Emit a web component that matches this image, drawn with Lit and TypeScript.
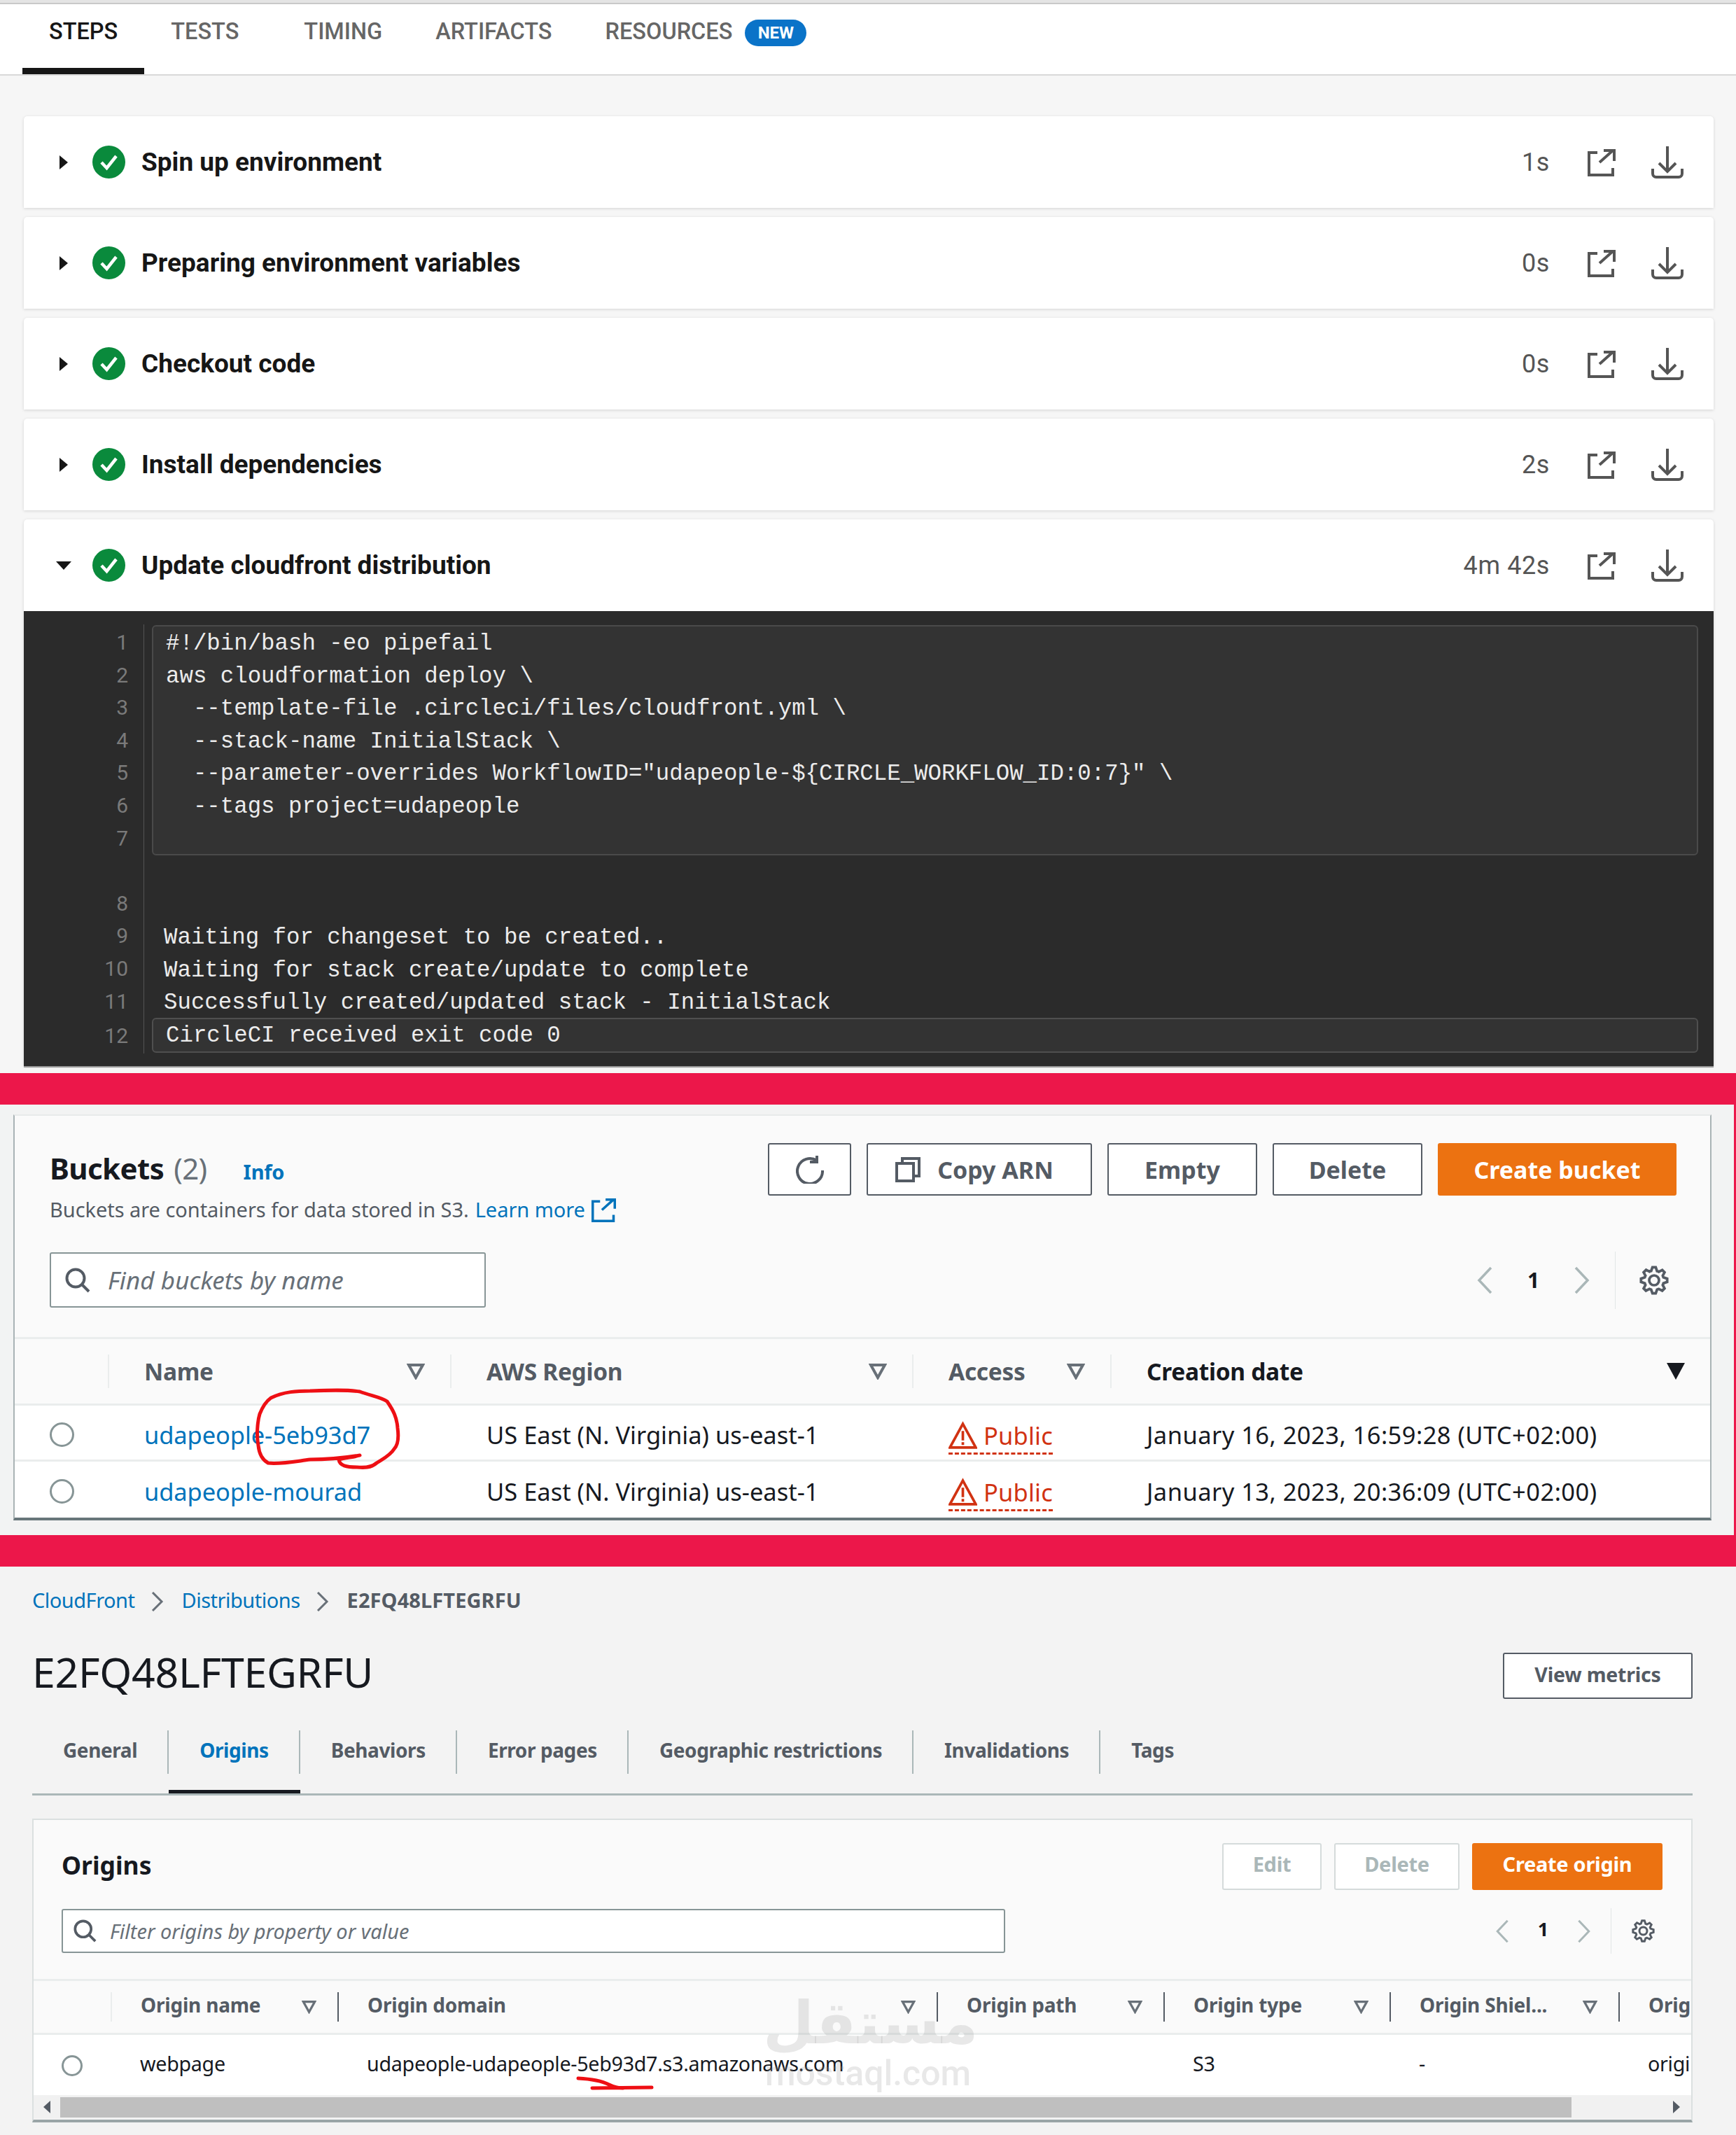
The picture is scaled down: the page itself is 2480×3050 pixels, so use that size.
import { LitElement, html, css, svg } from "lit";
import { customElement } from "lit/decorators.js";

const check = html`<svg class="check" viewBox="0 0 47 47"><circle cx="23.5" cy="23.5" r="23.5" fill="#0a8a3c"/><path d="M13 24l7.5 8L34 15" fill="none" stroke="#fff" stroke-width="4.5"/></svg>`;
const ext = html`<svg class="ext" viewBox="0 0 40 40" fill="none" stroke="currentColor" stroke-width="4"><path d="M14 6H2v32h34V28"/><path d="M17 20L36 3M23 3h15v15"/></svg>`;
const dl = html`<svg class="dl" viewBox="0 0 46 46" fill="none" stroke="#555" stroke-width="4"><path d="M23 0v36M11 24l12 12 12-12"/><path d="M2 32v7a5 5 0 0 0 5 5h32a5 5 0 0 0 5-5v-7"/></svg>`;
const tri = html`<svg class="tri" viewBox="0 0 26 24"><path d="M3 3h20L13 21z" fill="none" stroke="#687078" stroke-width="4"/></svg>`;
const triBlack = html`<svg class="tri black" viewBox="0 0 26 24"><path d="M0 0h26L13 24z" fill="#16191f"/></svg>`;
const search = html`<svg class="search" viewBox="0 0 36 36" fill="none" stroke="#545b64" stroke-width="4"><circle cx="15" cy="15" r="12.5"/><path d="M24 24l10 10"/></svg>`;
const gear = html`<svg class="gear" viewBox="-1 -1 18 18" fill="none" stroke="#545b64" stroke-width="1.6"><path d="M13.3 5.2l1.1-2.1L13 1.7l-2.1 1.1c-.3-.2-.7-.3-1.1-.4L9 0H7l-.8 2.3c-.3.1-.7.2-1 .4L3.1 1.6 1.6 3.1l1.1 2.1c-.2.3-.3.7-.4 1L0 7v2l2.3.8c.1.4.3.7.4 1.1l-1.1 2.1 1.4 1.4 2.1-1.1c.3.2.7.3 1.1.4L7 16h2l.8-2.3c.4-.1.7-.3 1.1-.4l2.1 1.1 1.4-1.4-1.1-2.1c.2-.3.3-.7.4-1.1L16 9V7l-2.3-.8c-.1-.3-.3-.7-.4-1z"/><circle cx="8" cy="8" r="3"/></svg>`;
const chevL = html`<svg class="chev" viewBox="0 0 22 40" fill="none" stroke="#aab7b8" stroke-width="3.5"><path d="M20 2L3 20l17 18"/></svg>`;
const chevR = html`<svg class="chev" viewBox="0 0 22 40" fill="none" stroke="#aab7b8" stroke-width="3.5"><path d="M2 2l17 18L2 38"/></svg>`;
const crumbChev = html`<svg class="cchev" viewBox="0 0 18 28" fill="none" stroke="#687078" stroke-width="3"><path d="M2 1l13 13L2 27"/></svg>`;
const warn = html`<svg class="warn" viewBox="0 0 40 40" fill="none" stroke="#d13212" stroke-width="3.6"><path d="M20 4L38 37H2z"/><path d="M20 14v13M20 29.500v4"/></svg>`;

const steps = [
  ["Spin up environment", "1s"],
  ["Preparing environment variables", "0s"],
  ["Checkout code", "0s"],
  ["Install dependencies", "2s"],
];
const code1 = [
  "#!/bin/bash -eo pipefail",
  "aws cloudformation deploy \\",
  "  --template-file .circleci/files/cloudfront.yml \\",
  "  --stack-name InitialStack \\",
  '  --parameter-overrides WorkflowID="udapeople-${CIRCLE_WORKFLOW_ID:0:7}" \\',
  "  --tags project=udapeople",
  " ",
];
const code2 = [
  "Waiting for changeset to be created..",
  "Waiting for stack create/update to complete",
  "Successfully created/updated stack - InitialStack",
];

@customElement("app-root")
export class AppRoot extends LitElement {
  static styles = css`
    :host { display: block; position: relative; width: 2480px; height: 3050px; overflow: hidden; font-family: "Noto Sans", sans-serif; color: #16191f; background: #f3f3f3; }
    svg { display: block; flex: none; }
    .redbar { height: 45px; background: #ec174a; }
    .link { color: #0073bb; }

    /* build section */
    .build { height: 1533px; background: #f6f6f6; font-family: Roboto, sans-serif; }
    .topbar { height: 6px; background: #e4e4e4; border-bottom: 2px solid #c9c9c9; box-sizing: border-box; }
    .btabs { display: flex; height: 102px; box-sizing: border-box; background: #fff; border-bottom: 2px solid #d9d9d9; padding-left: 32px; }
    .btab { height: 100px; box-sizing: border-box; padding: 21px 38px 0; font-size: 32.500px; line-height: 36px; font-weight: 500; color: #666; display: flex; gap: 18px; }
    .btab.on { color: #161616; border-bottom: 9px solid #161616; }
    .btab.wide { margin-right: 17px; }
    .badge { height: 38px; width: 88px; margin-top: 1px; border-radius: 19px; background: #0a73c8; color: #fff; font-size: 24px; font-weight: 700; line-height: 38px; text-align: center; }
    .steps { display: flex; flex-direction: column; gap: 13px; margin: 58px 32px 0 34px; }
    .step { background: #fff; border-radius: 5px 5px 0 0; box-shadow: 0 1px 4px rgba(0,0,0,.14); }
    .srow { height: 131px; display: flex; align-items: center; padding: 0 43px 0 45px; }
    .arrow { width: 24px; height: 24px; margin-right: 29px; }
    .check { width: 47px; height: 47px; margin-right: 23px; }
    .sname { flex: 1; font-size: 37px; font-weight: 700; color: #161616; }
    .stime { font-size: 36px; color: #555; letter-spacing: .6px; }
    .ext { width: 40px; height: 40px; margin-left: 54px; color: #555; }
    .dl { width: 46px; height: 46px; margin-left: 51px; }
    .code { height: 650px; background: #2b2b2b; display: flex; box-shadow: 0 2px 0 #999; font-family: "Liberation Mono", monospace; font-size: 32.4px; line-height: 46.6px; color: #ececec; }
    .gutter { width: 172px; height: 613px; box-sizing: border-box; margin-top: 19px; padding: 3px 22px 0 0; border-right: 1px solid #555; text-align: right; color: #7a7a7a; font-family: Roboto, sans-serif; font-size: 30px; }
    .gap { height: 46.6px; }
    .num12 { margin-top: 3px; }
    .cbody { flex: 1; padding: 20px 22px 0 11px; }
    .cbox { height: 329px; box-sizing: border-box; border: 2px solid #4a4a4a; border-radius: 6px; background: #333; padding: 2px 0 0 18px; }
    .cplain { margin-top: 95px; height: 137px; padding-left: 17px; }
    .cbox div, .cplain div, .cbox2 { white-space: pre; }
    .cbox2 { height: 50px; box-sizing: border-box; border: 2px solid #4f4f4f; border-radius: 6px; background: #333; padding-left: 18px; line-height: 48px; }

    /* s3 */
    .s3 { height: 615px; box-sizing: border-box; padding: 14px 0 0 19px; border-right: 3px solid #ec174a; background: #f2f3f3; }
    .card { background: #fafafa; box-sizing: border-box; width: 2426px; height: 580px; border: 2px solid #a9b3b5; border-top-color: #e8eaea; border-bottom: 4px solid #68767a; overflow: hidden; }
    .chead { display: flex; justify-content: space-between; padding: 39px 48px 0 50px; }
    .title { font-size: 42px; font-weight: 700; line-height: 75px; height: 77px; margin-top: -2px; letter-spacing: -.6px; display: flex; align-items: baseline; }
    .count { font-weight: 400; color: #687078; margin-left: 14px; }
    .info { font-size: 29px; font-weight: 700; color: #0073bb; margin-left: 52px; letter-spacing: -.2px; }
    .desc { font-size: 29px; line-height: 40px; color: #545b64; display: flex; align-items: center; letter-spacing: -.05px; }
    .desc .link { margin-left: 9px; }
    .desc .ext { width: 35px; height: 35px; margin-left: 9px; color: #0073bb; }
    .btns { display: flex; gap: 22px; }
    .btn { height: 75px; box-sizing: border-box; border: 2px solid #545b64; border-radius: 3px; background: #fff; color: #545b64; font-weight: 700; font-size: 34px; display: flex; align-items: center; justify-content: center; }
    .btn svg { margin-right: 24px; }
    .b-refresh { width: 119px; }
    .b-refresh svg { margin: 0; }
    .b-copy { width: 322px; padding-right: 14px; }
    .b-empty, .b-del { width: 214px; }
    .b-create { width: 341px; background: #ec7211; border-color: #ec7211; color: #fff; }
    .srow2 { display: flex; justify-content: space-between; align-items: center; margin: 41px 59px 0 50px; height: 79px; }
    .input { width: 623px; height: 79px; box-sizing: border-box; border: 2px solid #879596; border-radius: 3px; background: #fff; display: flex; align-items: center; padding-left: 20px; font-size: 35px; font-style: italic; color: #687078; letter-spacing: .1px; }
    .search { width: 36px; height: 36px; margin-right: 25px; }
    .pager { display: flex; align-items: center; height: 82px; }
    .chev { width: 22px; height: 40px; }
    .pnum { width: 117px; text-align: center; font-size: 30px; font-weight: 700; }
    .pager .pdiv { width: 1px; height: 82px; background: #e2e6e6; margin: 0 34px 0 36px; }
    .gear { width: 42px; height: 42px; }
    .spacer { height: 42px; }
    .thead, .trow { display: grid; grid-template-columns: 133px 489px 660px 283px 1fr; }
    .thead { height: 98px; box-sizing: border-box; border-top: 3px solid #eaeded; border-bottom: 3px solid #eaeded; align-items: center; }
    .th { height: 48px; border-left: 2px solid #eaeded; display: flex; align-items: center; justify-content: space-between; padding: 0 36px 0 50px; font-size: 33.500px; font-weight: 700; color: #545b64; letter-spacing: -.3px; }
    .th.none { border: 0; }
    .th.dark { color: #16191f; }
    .tri { width: 26px; height: 24px; }
    .trow { background: #fff; align-items: center; font-size: 34.500px; height: 80px; box-sizing: border-box; padding-top: 5px; border-bottom: 3px solid #eaeded; }
    .trow.last { height: 81px; border: 0; padding-top: 3px; }
    .radio { width: 35px; height: 35px; box-sizing: border-box; border: 3px solid #879596; border-radius: 50%; background: #fff; margin-left: 50px; }
    .td { padding-left: 52px; white-space: nowrap; overflow: hidden; }
    .td.name { letter-spacing: -.1px; }
    .td.date { letter-spacing: .45px; }
    .td.pc { display: flex; padding-top: 6px; }
    .pub { display: flex; align-items: center; gap: 9px; color: #d13212; border-bottom: 3px dashed #d13212; box-sizing: border-box; height: 52px; letter-spacing: .2px; }
    .warn { width: 41px; height: 41px; }

    /* cloudfront */
    .cf { height: 812px; padding: 29px 62px 0 46px; }
    .crumbs { display: flex; align-items: center; height: 36px; font-size: 29px; letter-spacing: -.5px; }
    .cchev { width: 18px; height: 28px; margin: 6px 26px 0 23px; }
    .cur { color: #545b64; font-weight: 700; letter-spacing: .1px; }
    .hrow { display: flex; justify-content: space-between; margin-top: 58px; height: 66px; }
    .h1 { font-size: 59px; line-height: 54px; letter-spacing: -.3px; }
    .vm { width: 271px; height: 66px; font-size: 28.500px; padding-bottom: 4px; letter-spacing: -.2px; }
    .ctabs { display: flex; margin-top: 45px; height: 93px; box-sizing: border-box; border-bottom: 3px solid #aab7b8; }
    .ctab { height: 90px; box-sizing: border-box; }
    .ctab.on { border-bottom: 5px solid #16191f; }
    .ctab span { display: block; height: 62px; line-height: 56px; box-sizing: border-box; padding: 0 43px 0 44px; border-right: 2px solid #aab7b8; font-size: 28px; font-weight: 700; color: #545b64; letter-spacing: -.4px; }
    .ctab.on span { color: #0073bb; }
    .ctab.end span { border: 0; }
    .ocard { margin-top: 33px; width: 2372px; height: 434px; box-sizing: border-box; background: #fafafa; border: 2px solid #dbe0e0; border-bottom: 4px solid #9aa5a7; }
    .ohead { display: flex; justify-content: space-between; align-items: center; padding: 33px 41px 0 40px; }
    .ot { font-size: 35.500px; font-weight: 700; padding-bottom: 5px; }
    .obtns { display: flex; gap: 18px; }
    .obtn { height: 67px; box-sizing: border-box; border: 2px solid #d5dbdb; border-radius: 3px; background: #fff; color: #aab7b8; font-size: 29px; font-weight: 700; display: flex; align-items: center; justify-content: center; letter-spacing: -.3px; padding-bottom: 8px; }
    .o-edit { width: 142px; }
    .o-del { width: 179px; }
    .o-new { width: 272px; background: #ec7211; border-color: #ec7211; color: #fff; }
    .osearch { display: flex; justify-content: space-between; align-items: center; margin: 27px 52px 0 40px; height: 63px; }
    .oinput { width: 1348px; height: 63px; padding-left: 15px; font-size: 29px; letter-spacing: 0; }
    .oinput .search { width: 33px; height: 33px; margin-right: 19px; }
    .opager { height: 65px; }
    .opager .chev { width: 20px; height: 34px; }
    .opager .pnum { width: 97px; font-size: 27px; margin-top: -6px; }
    .opager .pdiv { height: 65px; margin: 0 29px 0 28px; }
    .opager .gear { width: 33px; height: 33px; }
    .othead, .otrow { display: grid; grid-template-columns: 110px 324px 856px 324px 323px 327px 104px; overflow: hidden; }
    .othead { margin-top: 37px; height: 80px; box-sizing: border-box; border-top: 3px solid #eaeded; border-bottom: 3px solid #eaeded; align-items: center; }
    .oth { height: 42px; border-left: 2px solid #545b64; display: flex; align-items: center; justify-content: space-between; padding: 0 30px 6px 41px; box-sizing: border-box; font-size: 28px; font-weight: 700; color: #545b64; letter-spacing: -.2px; white-space: nowrap; overflow: hidden; }
    .oth.none { border: 0; }
    .oth.soft { border-left-color: #eaeded; }
    .oth .tri { width: 21px; height: 20px; margin-top: 6px; }
    .otrow { height: 86px; background: #fff; align-items: center; font-size: 28.700px; letter-spacing: -.3px; padding-bottom: 6px; box-sizing: border-box; }
    .otd { padding-left: 42px; white-space: nowrap; overflow: hidden; }
    .oradio { width: 30px; height: 30px; box-sizing: border-box; border: 3px solid #879596; border-radius: 50%; margin: 8px 0 0 40px; }
    .sbar { height: 34px; background: #f1f1f1; display: flex; align-items: center; }
    .sleft { width: 38px; display: flex; justify-content: center; }
    .thumb { width: 2159px; height: 29px; background: #bfbfbf; }
    .sright { margin-left: 145px; }
    .sarrow { width: 10px; height: 18px; }

    /* overlay */
    .ink { position: absolute; left: 0; top: 0; width: 2480px; height: 3050px; pointer-events: none; }
    .wm { position: absolute; left: 1090px; width: 300px; text-align: center; color: rgba(150,150,150,.22); pointer-events: none; white-space: nowrap; }
    .wm1 { top: 2830px; font: 700 84px/120px "DejaVu Sans", sans-serif; }
    .wm2 { top: 2932px; font: 500 50px/60px Roboto, sans-serif; }
  `;

  renderStep(name: string, time: string, open = false) {
    return html`<div class="srow">
      <svg class="arrow" viewBox="0 0 24 24">${open ? svg`<path d="M1 6h22L12 18z" fill="#161616"/>` : svg`<path d="M6 2l12 10L6 22z" fill="#161616"/>`}</svg>
      ${check}<div class="sname">${name}</div><div class="stime">${time}</div>${ext}${dl}
    </div>`;
  }

  build() {
    return html`<section class="build">
      <div class="topbar"></div>
      <div class="btabs">
        <div class="btab on">STEPS</div>
        <div class="btab wide">TESTS</div>
        <div class="btab">TIMING</div>
        <div class="btab">ARTIFACTS</div>
        <div class="btab">RESOURCES<span class="badge">NEW</span></div>
      </div>
      <div class="steps">
        ${steps.map(([n, t]) => html`<div class="step">${this.renderStep(n, t)}</div>`)}
        <div class="step">
          ${this.renderStep("Update cloudfront distribution", "4m 42s", true)}
          <div class="code">
            <div class="gutter">${[1, 2, 3, 4, 5, 6, 7].map((n) => html`<div>${n}</div>`)}<div class="gap"></div>${[8, 9, 10, 11].map((n) => html`<div>${n}</div>`)}<div class="num12">12</div></div>
            <div class="cbody">
              <div class="cbox">${code1.map((l) => html`<div>${l}</div>`)}</div>
              <div class="cplain">${code2.map((l) => html`<div>${l}</div>`)}</div>
              <div class="cbox2">CircleCI received exit code 0</div>
            </div>
          </div>
        </div>
      </div>
    </section>`;
  }

  s3() {
    const row = (name: string, date: string, last = false) => html`<div class="trow ${last ? "last" : ""}">
      <div class="radio"></div><div class="td link name">${name}</div><div class="td">US East (N. Virginia) us-east-1</div>
      <div class="td pc"><div class="pub">${warn}Public</div></div><div class="td date">${date}</div>
    </div>`;
    return html`<section class="s3"><div class="card">
      <div class="chead">
        <div>
          <div class="title">Buckets<span class="count">(2)</span><span class="info">Info</span></div>
          <div class="desc">Buckets are containers for data stored in S3.<span class="link">Learn more</span>${ext}</div>
        </div>
        <div class="btns">
          <div class="btn b-refresh"><svg width="40" height="40" viewBox="0 0 40 40" fill="none" stroke="#545b64" stroke-width="4"><path d="M30 7A18 18 0 1 0 38 21"/><path d="M30 0v9H20"/></svg></div>
          <div class="btn b-copy"><svg width="36" height="36" viewBox="0 0 36 36" fill="none" stroke="#545b64" stroke-width="4"><path d="M10 8V2h24v25h-8"/><rect x="2" y="9" width="24" height="25"/></svg>Copy ARN</div>
          <div class="btn b-empty">Empty</div>
          <div class="btn b-del">Delete</div>
          <div class="btn b-create">Create bucket</div>
        </div>
      </div>
      <div class="srow2">
        <div class="input">${search}Find buckets by name</div>
        <div class="pager">${chevL}<div class="pnum">1</div>${chevR}<div class="pdiv"></div>${gear}</div>
      </div>
      <div class="spacer"></div>
      <div class="thead">
        <div class="th none"></div>
        <div class="th">Name${tri}</div>
        <div class="th">AWS Region${tri}</div>
        <div class="th">Access${tri}</div>
        <div class="th dark">Creation date${triBlack}</div>
      </div>
      ${row("udapeople-5eb93d7", "January 16, 2023, 16:59:28 (UTC+02:00)")}
      ${row("udapeople-mourad", "January 13, 2023, 20:36:09 (UTC+02:00)", true)}
    </div></section>`;
  }

  cf() {
    const tabs = ["General", "Origins", "Behaviors", "Error pages", "Geographic restrictions", "Invalidations", "Tags"];
    const cols = ["Origin name", "Origin domain", "Origin path", "Origin type", "Origin Shiel..."];
    return html`<section class="cf">
      <div class="crumbs"><span class="link">CloudFront</span>${crumbChev}<span class="link">Distributions</span>${crumbChev}<span class="cur">E2FQ48LFTEGRFU</span></div>
      <div class="hrow"><div class="h1">E2FQ48LFTEGRFU</div><div class="btn vm">View metrics</div></div>
      <div class="ctabs">${tabs.map((t, i) => html`<div class="ctab ${i === 1 ? "on" : ""} ${i === 6 ? "end" : ""}"><span>${t}</span></div>`)}</div>
      <div class="ocard">
        <div class="ohead"><div class="ot">Origins</div><div class="obtns"><div class="obtn o-edit">Edit</div><div class="obtn o-del">Delete</div><div class="obtn o-new">Create origin</div></div></div>
        <div class="osearch">
          <div class="input oinput">${search}Filter origins by property or value</div>
          <div class="pager opager">${chevL}<div class="pnum">1</div>${chevR}<div class="pdiv"></div>${gear}</div>
        </div>
        <div class="othead">
          <div class="oth none"></div>
          ${cols.map((c, i) => html`<div class="oth ${i === 0 ? "soft" : ""}">${c}${tri}</div>`)}
          <div class="oth">Origin</div>
        </div>
        <div class="otrow">
          <div class="oradio"></div><div class="otd">webpage</div><div class="otd">udapeople-udapeople-5eb93d7.s3.amazonaws.com</div><div class="otd"></div><div class="otd">S3</div><div class="otd">-</div><div class="otd">origin</div>
        </div>
        <div class="sbar">
          <div class="sleft"><svg class="sarrow" viewBox="0 0 10 18"><path d="M10 0v18L0 9z" fill="#545b64"/></svg></div>
          <div class="thumb"></div>
          <svg class="sarrow sright" viewBox="0 0 10 18"><path d="M0 0v18l10-9z" fill="#545b64"/></svg>
        </div>
      </div>
    </section>`;
  }

  render() {
    return html`${this.build()}<div class="redbar"></div>${this.s3()}<div class="redbar"></div>${this.cf()}
      <div class="wm wm1">مستقل</div>
      <div class="wm wm2">mostaql.com</div>
      <svg class="ink" viewBox="0 0 2480 3050" fill="none" stroke="#ee0f14" stroke-width="5" stroke-linecap="round" stroke-linejoin="round">
        <path d="M387 1997C405 1988 425 1987 443 1987C470 1986 495 1985 514 1988C530 1994 545 1996 553 2002C562 2015 567 2025 568 2040C570 2055 568 2065 563 2070C557 2080 545 2085 538 2090C530 2097 520 2097 510 2096C495 2096 485 2094 484 2085C495 2082 505 2082 514 2079C490 2083 465 2085 443 2085C420 2088 400 2092 383 2090C374 2085 370 2075 369 2065C366 2050 368 2030 371 2020C375 2010 380 2002 387 1997Z"/>
        <path d="M826 2969C845 2970 860 2973 870 2978C878 2982 884 2983 890 2983M846 2983L931 2982" />
      </svg>`;
  }
}
